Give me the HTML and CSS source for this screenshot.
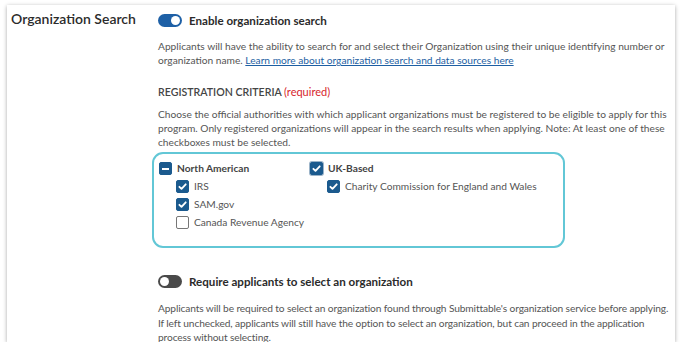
FILE: index.html
```html
<!DOCTYPE html>
<html lang="en">
<head>
    <meta charset="UTF-8">
    <meta name="viewport" content="width=device-width, initial-scale=1.0">
    <title>Organization Search Settings</title>
    <link rel="stylesheet" href="styles.css">
</head>
<body>
    <div class="card">
        <!-- Left label column -->
        <h2 class="row-label">Organization Search</h2>

        <!-- Settings column -->
        <div class="row-content">
            <div class="toggle-row">
                <span class="toggle on"><span class="knob"></span></span>
                <span class="toggle-label">Enable organization search</span>
            </div>
            <p class="help">Applicants will have the ability to search for and select their Organization using their unique identifying number or organization name. <a href="#">Learn more about organization search and data sources here</a></p>

            <h3 class="section-title">Registration Criteria <span class="required">(required)</span></h3>
            <p class="help">Choose the official authorities with which applicant organizations must be registered to be eligible to apply for this program. Only registered organizations will appear in the search results when applying. Note: At least one of these checkboxes must be selected.</p>

            <div class="criteria">
                <div class="group">
                    <label class="check parent">
                        <span class="box mixed"><span class="dash"></span></span>
                        North American
                    </label>
                    <div class="children">
                        <label class="check">
                            <span class="box checked"><svg viewBox="0 0 12 12"><path d="M2.6 6.3l2.3 2.3 4.6-5"/></svg></span>
                            IRS
                        </label>
                        <label class="check">
                            <span class="box checked"><svg viewBox="0 0 12 12"><path d="M2.6 6.3l2.3 2.3 4.6-5"/></svg></span>
                            SAM.gov
                        </label>
                        <label class="check">
                            <span class="box"></span>
                            Canada Revenue Agency
                        </label>
                    </div>
                </div>
                <div class="group">
                    <label class="check parent">
                        <span class="box checked focus"><svg viewBox="0 0 12 12"><path d="M2.6 6.3l2.3 2.3 4.6-5"/></svg></span>
                        UK-Based
                    </label>
                    <div class="children">
                        <label class="check">
                            <span class="box checked"><svg viewBox="0 0 12 12"><path d="M2.6 6.3l2.3 2.3 4.6-5"/></svg></span>
                            Charity Commission for England and Wales
                        </label>
                    </div>
                </div>
            </div>

            <div class="toggle-row second">
                <span class="toggle off"><span class="knob"></span></span>
                <span class="toggle-label">Require applicants to select an organization</span>
            </div>
            <p class="help last">Applicants will be required to select an organization found through Submittable's organization service before applying. If left unchecked, applicants will still have the option to select an organization, but can proceed in the application process without selecting.</p>
        </div>
    </div>
</body>
</html>
```

FILE: styles.css
```css
/* Reset */
* {
    margin: 0;
    padding: 0;
    box-sizing: border-box;
}

body {
    font-family: 'Lato', 'Open Sans', sans-serif;
    background-color: #fff;
    color: #333;
    padding: 5px 11px 0 7px;
}

/* Card */
.card {
    display: flex;
    background-color: #fff;
    height: 337px;
    overflow: hidden;
    box-shadow: 0 1px 4px rgba(0, 0, 0, 0.35);
    padding: 4px 0 0 4px;
}

.row-label {
    width: 147px;
    flex-shrink: 0;
    font-size: 14px;
    font-weight: 600;
    color: #2b2b2b;
    line-height: 20px;
}

.row-content {
    width: 517px;
    flex-shrink: 0;
    padding-top: 4px;
}

/* Toggles */
.toggle-row {
    display: flex;
    align-items: center;
    gap: 7px;
    height: 14px;
}

.toggle-row.second {
    margin-top: 26px;
}

.toggle {
    position: relative;
    width: 24px;
    height: 13px;
    border-radius: 7px;
    background-color: #1e60a6;
}

.toggle.off {
    background-color: #4a4a4a;
}

    .toggle .knob {
        position: absolute;
        top: 2px;
        right: 2px;
        width: 9px;
        height: 9px;
        border-radius: 50%;
        background-color: #fff;
    }

    .toggle.off .knob {
        right: auto;
        left: 2px;
    }

.toggle-label {
    font-size: 11.6px;
    font-weight: 700;
    color: #2b2b2b;
}

/* Text */
.help {
    font-size: 10.2px;
    line-height: 14px;
    color: #555;
    margin-top: 12px;
}

    .help a {
        color: #1e5fa3;
    }

    .help.last {
        margin-top: 13px;
        line-height: 14.5px;
        letter-spacing: -0.12px;
    }

.section-title {
    font-size: 10.6px;
    font-weight: 600;
    text-transform: uppercase;
    color: #444;
    margin-top: 18px;
    line-height: 14px;
}

    .section-title .required {
        text-transform: none;
        font-weight: 400;
        color: #d7262e;
        font-size: 11px;
    }

.section-title + .help {
    margin-top: 8px;
}

/* Registration criteria box */
.criteria {
    display: flex;
    margin: 3px 0 0 -6px;
    width: 413px;
    height: 96px;
    padding: 8px 5px;
    border: 2.5px solid #62c7d6;
    border-radius: 11px;
}

.group {
    display: flex;
    flex-direction: column;
    gap: 5px;
    white-space: nowrap;
}

    .group:first-child {
        width: 151px;
        flex-shrink: 0;
    }

.children {
    display: flex;
    flex-direction: column;
    gap: 5px;
    padding-left: 17px;
}

.check {
    display: flex;
    align-items: center;
    gap: 5px;
    font-size: 10.2px;
    color: #555;
    line-height: 13px;
}

    .check.parent {
        font-weight: 700;
        color: #444;
    }

.box {
    display: flex;
    align-items: center;
    justify-content: center;
    width: 13px;
    height: 13px;
    border: 1px solid #777;
    border-radius: 2px;
    background-color: #fff;
}

    .box.checked,
    .box.mixed {
        border-color: #1b5a8e;
        background-color: #1b5a8e;
    }

    .box.focus {
        box-shadow: 0 0 0 1px #9bb3c8;
    }

    .box svg {
        width: 11px;
        height: 11px;
        fill: none;
        stroke: #fff;
        stroke-width: 2;
        stroke-linecap: round;
        stroke-linejoin: round;
    }

    .box .dash {
        width: 7px;
        height: 2px;
        background-color: #fff;
    }
```
